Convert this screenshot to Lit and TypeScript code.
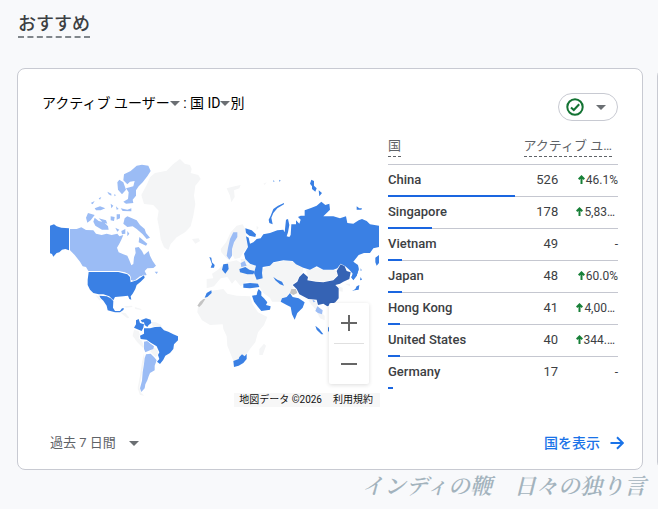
import { LitElement, html, css, svg } from "lit";
import { customElement } from "lit/decorators.js";

interface Row {
  country: string;
  users: number;
  change: string;
  share: number;
}

const rows: Row[] = [
  { country: "China", users: 526, change: "46.1%", share: 55 },
  { country: "Singapore", users: 178, change: "5,83…", share: 19 },
  { country: "Vietnam", users: 49, change: "", share: 6 },
  { country: "Japan", users: 48, change: "60.0%", share: 6 },
  { country: "Hong Kong", users: 41, change: "4,00…", share: 5 },
  { country: "United States", users: 40, change: "344.…", share: 5 },
  { country: "Germany", users: 17, change: "", share: 2 },
];

const caret = html`<svg class="caret" viewBox="0 0 10 5" aria-hidden="true"><path d="M0 0H10L5 5Z" /></svg>`;

@customElement("world-map")
export class WorldMap extends LitElement {
  static styles = css`
    :host { display: block; }
    .map { display: block; width: 100%; height: auto; }
    .none { fill: #f4f5f6; }
    .low { fill: #9bbcf5; }
    .mid { fill: #3a80e4; }
    .high { fill: #3563b4; }
    .gray { fill: #c4c4c4; }
    .edge { stroke: #fff; stroke-width: 4; stroke-linejoin: round; paint-order: stroke; }
  `;

  render() {
    return html`<svg class="map" viewBox="30 0 990 774" role="img" aria-label="国別のアクティブ ユーザー">
      ${this.northAmerica()} ${this.southAmerica()} ${this.africaAndSouthAsia()} ${this.northAsia()} ${this.eastAsia()}
    </svg>`;
  }

  private northAmerica() {
    return svg`
      <path class="none" d="M420 30L434 44 450 48 455 60 452 72 475 78 482 90 466 110 462 140 466 165 460 200 452 232 435 250 410 265 392 285 385 303 372 295 362 270 358 240 352 210 356 185 340 168 312 165 304 138 320 108 330 85 345 72 380 65 400 45ZM456 270L476 268 480 276 466 284Z"/>
      <path class="mid" d="M30 230L42 226 50 232 64 236 87 238V304L76 300 66 302 58 310 50 312 40 323 36 315 30 313Z"/>
      <path class="low" d="M90 240L110 240 124 235 138 243 160 244 168 254 185 258 200 254 215 258 232 254 238 262 250 258 244 272 238 284 231 296 236 310 250 316 262 320 268 334 274 349 280 345 282 325 287 312 285 296 296 294 306 306 312 318 326 306 330 320 338 336 348 350 340 357 322 358 314 366 320 378 310 380 300 382 282 396 272 392 270 378 255 370 235 366 145 366 138 354 128 352 120 338 104 318 90 304Z"/>
      <path class="low" d="M290 50L306 47 325 50 332 66 322 82 308 100 296 112 288 124 288 140 278 152 280 162 258 164 250 158 264 150 266 130 258 118 280 112 284 96 270 98 262 106 250 94 252 76 272 66ZM238 92L250 100 258 122 246 136 234 122 232 100ZM242 178L262 182 274 178 274 187 248 186ZM262 202L290 214 300 228 314 240 318 252 330 266 320 270 308 256 290 240 278 232 262 234 250 224 254 208ZM298 264L322 284 318 290 296 280ZM164 206L176 216 192 220 204 232 206 242 186 242 166 230 160 218ZM144 192L164 198 152 214 142 221 138 206ZM176 208L198 214 202 224 188 220ZM164 178L180 172 196 178 182 184 168 184ZM152 162L164 156 158 166ZM176 148L184 144 180 152ZM202 128L214 134 214 140 206 136ZM222 136L228 138 224 142ZM212 164L220 170 214 178ZM228 172L236 180 230 182ZM212 202L224 204 222 216 212 214ZM230 196L240 196 240 208 230 212ZM244 246L256 240 256 254 246 256ZM262 246L268 254 262 262ZM344 368L354 368 350 375ZM226 236L238 242 232 248Z"/>
      <g transform="translate(0 330)">
        <path class="mid edge" d="M146 39H235L262 46 270 54 272 70 290 64 312 49 314 56 302 68 290 78 286 90 278 104 272 112 274 122 268 120 264 110 250 112 225 114 220 124 208 112 190 106 176 106 160 102 150 92 143 78 143 62Z"/>
        <path class="mid" d="M178 110L200 112 212 118 220 126 219 146 225 156 240 156 246 148 252 148 250 153 240 160 225 160 203 154 200 140 190 125 182 118Z"/>
        <path class="none" d="M166 108L176 112 184 124 178 124ZM240 160L256 162 268 176 262 178ZM252 142L275 140 278 144 258 146ZM284 144L304 150 304 153 286 150Z"/>
      </g>`;
  }

  private southAmerica() {
    return svg`<g transform="translate(0 330)">
      <path class="none" d="M282 212L296 216 300 228 296 238 306 246 312 262 310 268 292 250 278 230ZM312 282L314 300 308 330 302 365 298 385 303 402 313 410 300 408 293 388 300 350 306 310ZM330 276L344 266 354 276 354 290 346 294ZM334 188L348 190 364 198 364 206 340 206Z"/>
      <path class="mid" d="M288 184L296 180 300 192 312 196 310 206 305 216 296 212 282 206 288 196ZM302 184L318 178 332 182 334 192 326 198 322 204 314 198 312 190 306 190Z"/>
      <path class="low" d="M312 248L322 246 332 254 342 262 340 270 330 274 316 280 312 270ZM318 286L332 284 342 294 350 304 344 320 344 334 330 342 326 352 322 364 316 376 314 388 304 399 300 388 306 365 308 340 312 315 314 298Z"/>
      <path class="mid edge" d="M312 208L330 208 345 204 362 203 372 214 385 218 400 226 414 232 414 244 402 256 400 270 390 282 376 290 370 302 360 315 351 308 358 300 354 288 358 280 350 262 330 250 320 242 302 240 300 230 312 224Z"/>
    </g>`;
  }

  private africaAndSouthAsia() {
    return svg`<g transform="translate(450 300)">
      <path class="none" d="M62 126L100 120 112 134 140 140 180 142 188 166 204 190 232 204 222 228 204 250 196 280 180 300 168 318 150 334 132 340 124 320 112 290 110 262 100 240 98 226 60 228 36 214 22 190 24 172 40 150ZM222 284L228 290 218 318 208 318 208 300Z"/>
      <path class="none" d="M50 90L70 88 66 74 84 62 96 50 112 40 140 34 160 46 190 46 220 60 250 42 290 34 310 38 340 54 338 70 322 94 306 108 316 130 296 132 288 148 270 158 246 158 240 146 220 132 206 110 170 98 152 112 136 92 126 104 112 84 92 88 72 112 50 118Z"/>
      <path class="none" d="M348 62L372 54 400 62 440 64 444 80 430 94 400 100 356 92ZM352 148L374 150 384 168 392 190 404 200 404 214 390 208 376 180 362 164Z"/>
      <path class="mid" d="M64 124L65 132 52 144 44 146 50 132ZM156 316L164 322 170 314 170 330 160 342 146 350 132 354 130 336 146 330 148 324ZM160 104L180 102 204 104 208 114 180 118 160 116ZM206 120L214 128 214 140 222 148 232 160 228 168 242 172 240 182 214 186 204 174 192 158 186 140 200 138 202 128ZM250 84L262 92 276 98 282 110 270 106 256 94Z"/>
      <path class="mid" d="M300 132L308 144 326 148 344 160 338 176 322 192 314 212 306 196 302 174 290 168 272 158 276 148 290 144ZM376 230L388 240 400 256 394 256 380 242ZM486 126L496 120 500 112 508 108 506 122 494 124ZM100 46L114 44 116 60 106 74 96 62ZM58 24L64 26 66 40 74 48 72 56 62 56 66 46ZM414 236L418 232V250L414 246Z"/>
      <path class="none" d="M152 30L188 30 180 42 156 46ZM360 150L374 158 384 176 372 170ZM440 110L458 116 458 128 446 126ZM464 104L480 104 480 112Z"/>
      <path class="low" d="M382 172L398 184 396 196 384 192 376 186ZM366 148L376 158 370 160Z"/>
      <path class="gray" d="M40 150L46 150 36 166 28 174 22 170 30 158ZM304 120L318 120 322 132 310 138 300 132Z"/>
      <path class="high edge" d="M340 72L354 84 352 94 378 98 400 100 430 94 444 80 440 66 452 46 464 52 470 66 482 70 478 90 460 98 450 104 436 108 446 118 446 148 436 160 420 168 412 172 400 164 384 168 380 152 355 150 328 136 320 120 308 108 322 98 328 84Z"/>
    </g>`;
  }

  private northAsia() {
    return svg`<g transform="translate(450 0)">
      <path class="none" d="M92 300L108 280 122 250 140 230 158 226 166 240 168 260 176 270 176 290 160 310 150 326 134 330 128 318 116 332 108 326 94 310ZM110 118L134 112 152 108 148 118 132 124 134 144 124 160 120 140ZM220 104L230 100 224 108ZM200 230L206 236 200 244Z"/>
      <path class="low" d="M130 250L142 250 142 264 132 280 126 300 126 320 118 332 110 320 114 296 120 270ZM152 342L164 336 170 350 154 354Z"/>
      <path class="mid" d="M166 238L185 244 198 256 196 264 178 260 168 252Z"/>
      <path class="mid" d="M168 262L176 266 180 284 190 280 200 270 212 268 220 256 240 252 262 244 280 242 284 250 288 212 294 210 298 228 294 250 290 262 298 264 302 258 304 226 318 226 318 214 328 224 332 212 324 204 332 200 344 200 344 184 365 176 380 170 394 158 406 168 418 164 420 182 400 202 430 202 450 208 468 202 472 222 490 224 506 214 516 210 530 216 540 226 567 230V294L550 298 540 312 522 312 506 318 490 338 504 348 506 360 500 380 490 392 484 386 488 374 478 362 466 352 452 344 442 358 430 362 400 362 380 352 360 362 340 356 318 346 308 336 280 334 250 340 240 350 218 354 216 372 218 388 200 392 192 372 198 350 180 344 166 330 162 314 174 294Z"/>
      <path class="mid" d="M282 162L282 166 262 178 250 192 244 206 248 226 238 222 236 212 242 200 250 180 264 170ZM364 92L372 96 372 110 380 118 376 128 366 120 366 112 360 104ZM386 124L396 132 388 142ZM500 172L508 178 516 178 514 182 500 182ZM250 94L254 97 250 98ZM268 92L272 95 268 98ZM556 326L567 318V342L560 350 556 340ZM148 360L166 354 178 362 194 366 190 376 172 376 150 370ZM512 358L515 364 512 366Z"/>
    </g>`;
  }

  private eastAsia() {
    return svg`<g transform="translate(450 300)">
      <path class="mid" d="M484 84L492 70 504 50 506 62 500 80 490 94ZM512 84L516 92 510 94Z"/>
    </g>`;
  }
}

@customElement("app-root")
export class AppRoot extends LitElement {
  static styles = css`
    :host {
      display: block;
      min-height: 100vh;
      box-sizing: border-box;
      padding: 12px 0 4px 17px;
      overflow: hidden;
      background: #f8f9fb;
      color: #3c4043;
      font-family: Roboto, "Noto Sans CJK JP", sans-serif;
      font-size: 14px;
      line-height: 20px;
    }
    button, a { font: inherit; color: inherit; text-decoration: none; }
    button { padding: 0; border: 0; background: none; cursor: pointer; }
    .heading {
      width: max-content;
      margin: 0 0 30px 1px;
      font-size: 18px;
      line-height: 24px;
      font-weight: 500;
      border-bottom: 2px dashed #80868b;
    }
    .cards { display: flex; gap: 14px; }
    .card {
      flex: 0 0 calc(100% - 15px);
      box-sizing: border-box;
      padding: 24px 18px 16px 24px;
      border: 1px solid #c8cad2;
      border-radius: 8px;
      background: #fff;
    }
    .top { display: flex; justify-content: space-between; align-items: flex-start; padding-right: 6px; }
    .title { display: flex; align-items: center; margin: 0; font-size: 14px; font-weight: 400; color: #000; white-space: pre; }
    .caret { width: 10px; height: 5px; fill: #6b6f73; }
    .pick { display: flex; align-items: center; }
    .status {
      display: flex;
      align-items: center;
      justify-content: space-between;
      box-sizing: border-box;
      width: 60px;
      height: 28px;
      padding: 0 11px 0 7px;
      border: 1px solid #c8cad2;
      border-radius: 14px;
    }
    .check { width: 18px; height: 18px; fill: none; stroke: #137333; stroke-width: 2; }
    .body { display: grid; grid-template-columns: 330fr 230fr; gap: 8px; padding: 12px 6px 0 8px; align-items: start; }
    .mapbox { position: relative; margin-top: 16px; }
    .zoom {
      position: absolute;
      right: 11px;
      bottom: 23px;
      width: 40px;
      border-radius: 2px;
      background: #fff;
      box-shadow: 0 1px 4px rgba(0, 0, 0, 0.14);
    }
    .zoom button { display: grid; place-items: center; width: 40px; height: 40px; }
    .sign { width: 16px; height: 16px; fill: #666; }
    .rule { height: 1px; margin: 0 5px; background: #e0e0e0; }
    .legal {
      position: absolute;
      right: 0;
      bottom: 0;
      display: flex;
      gap: 11px;
      padding: 0 7px 0 5px;
      background: #f7f7f7;
      color: #111;
      font-size: 10px;
      line-height: 14px;
      white-space: nowrap;
    }
    table { width: 100%; border-collapse: collapse; table-layout: fixed; }
    .c-name { width: 58%; }
    .c-users { width: 16%; }
    tr { position: relative; height: 32px; }
    th, td { padding: 0; text-align: left; vertical-align: middle; white-space: nowrap; }
    thead th { height: 30px; border-bottom: 1px solid #c5c7d0; font-size: 13px; font-weight: 400; color: #5f6368; vertical-align: top; }
    thead tr { height: 31px; }
    thead .metric { text-align: right; padding-right: 6px; }
    .term { display: inline-block; margin-top: 3px; line-height: 20px; border-bottom: 1px dashed #5f6368; }
    tbody th { font-size: 13px; font-weight: 500; color: #3c4043; }
    tbody td { text-align: right; font-size: 13px; }
    tbody tr:not(:last-child) > * { border-bottom: 1px solid #c5c7d0; }
    tbody .delta { font-size: 12px; }
    .delta.cut { padding-right: 3px; }
    .up { width: 7px; height: 9px; margin-right: 1px; fill: none; stroke: #188038; stroke-width: 2; }
    .bar { position: absolute; left: 0; bottom: -1px; height: 2px; background: #1a66e0; }
    .foot { display: flex; justify-content: space-between; align-items: center; padding: 26px 0 0 8px; }
    .range { display: flex; align-items: center; gap: 13px; font-size: 13px; color: #5f6368; }
    .link { display: flex; align-items: center; gap: 10px; font-weight: 500; color: #1a73e8; }
    .arrow { width: 14px; height: 14px; fill: none; stroke: #1a73e8; stroke-width: 2; }
    .mark {
      margin: 4px 12px 0 0;
      text-align: right;
      font-family: "Liberation Serif", "Noto Serif CJK JP", "Noto Sans CJK JP", serif;
      font-size: 22px;
      line-height: 26px;
      font-weight: 600;
      font-style: italic;
      color: #a3b3bd;
      white-space: nowrap;
    }
  `;

  private row(r: Row) {
    const cut = r.change.endsWith("…");
    return html`<tr>
      <th scope="row">${r.country}<span class="bar" style="width:${r.share}%"></span></th>
      <td>${r.users}</td>
      <td class="delta ${cut ? "cut" : ""}">${r.change
        ? html`<svg class="up" viewBox="0 0 7 9" aria-hidden="true"><path d="M3.5 9V1.5M0.7 4.2L3.5 1.4L6.3 4.2" /></svg>${r.change}`
        : "-"}</td>
    </tr>`;
  }

  render() {
    return html`
      <h2 class="heading">おすすめ</h2>
      <div class="cards">
        <section class="card">
          <div class="top">
            <h3 class="title"><button class="pick">アクティブ ユーザー${caret}</button> : <button class="pick">国 ID${caret}</button>別</h3>
            <button class="status" aria-label="データ品質">
              <svg class="check" viewBox="0 0 18 18" aria-hidden="true"><circle cx="9" cy="9" r="7.7" /><path d="M5 9.4L7.8 12L13.2 6.2" /></svg>
              ${caret}
            </button>
          </div>
          <div class="body">
            <div class="mapbox">
              <world-map></world-map>
              <div class="zoom">
                <button aria-label="拡大"><svg class="sign" viewBox="0 0 16 16"><path d="M7 0H9V7H16V9H9V16H7V9H0V7H7Z" /></svg></button>
                <div class="rule"></div>
                <button aria-label="縮小"><svg class="sign" viewBox="0 0 16 16"><path d="M0 7H16V9H0Z" /></svg></button>
              </div>
              <div class="legal"><span>地図データ ©2026</span><a href="#terms">利用規約</a></div>
            </div>
            <table>
              <colgroup><col class="c-name" /><col class="c-users" /><col /></colgroup>
              <thead>
                <tr>
                  <th scope="col"><span class="term">国</span></th>
                  <th scope="col" colspan="2" class="metric"><span class="term">アクティブ ユ…</span></th>
                </tr>
              </thead>
              <tbody>${rows.map((r) => this.row(r))}</tbody>
            </table>
          </div>
          <div class="foot">
            <button class="range">過去 7 日間 ${caret}</button>
            <a class="link" href="#countries">国を表示
              <svg class="arrow" viewBox="0 0 14 14" aria-hidden="true"><path d="M0.5 7H12.5M7 1.2L12.8 7L7 12.8" /></svg>
            </a>
          </div>
        </section>
        <section class="card" aria-hidden="true"></section>
      </div>
      <p class="mark">インディの鞭　日々の独り言</p>
    `;
  }
}
